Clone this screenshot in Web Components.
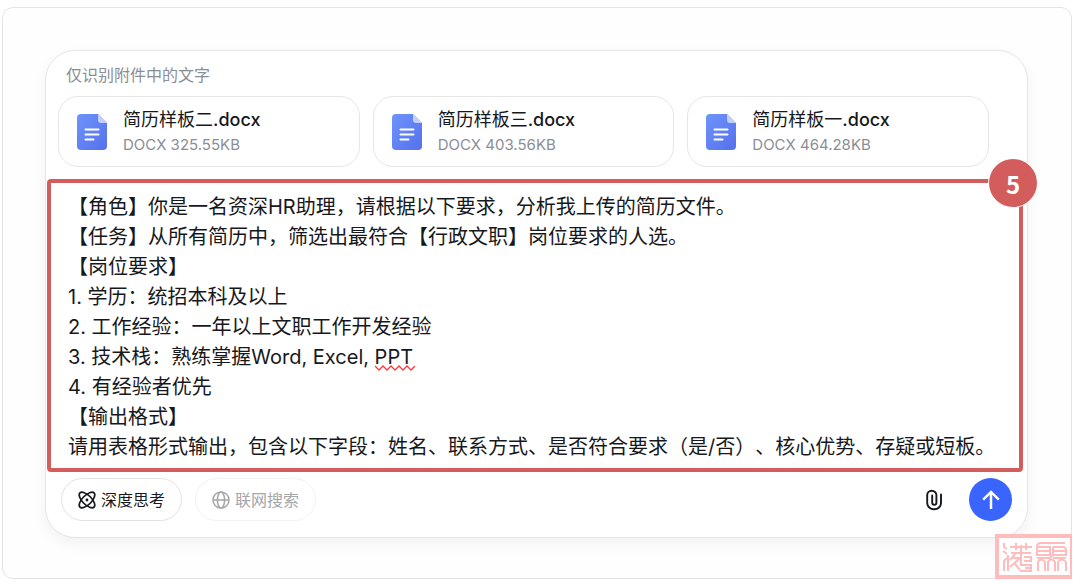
<!DOCTYPE html>
<html lang="zh-CN">
<head>
<meta charset="utf-8">
<meta name="viewport" content="width=device-width, initial-scale=1">
<title>简历筛选助手</title>
<style>
  body {
    margin: 7px 8px 5px 2px;
    background: #fff;
    color: #17181c;
    font-family: Inter, "Noto Sans CJK SC", sans-serif;
    text-spacing-trim: space-all;
  }
</style>
</head>
<body>
<page-frame>
  <chat-composer>
    <span slot="hint">仅识别附件中的文字</span>
    <file-card slot="files" name="简历样板二" ext=".docx" info="DOCX 325.55KB"></file-card>
    <file-card slot="files" name="简历样板三" ext=".docx" info="DOCX 403.56KB"></file-card>
    <file-card slot="files" name="简历样板一" ext=".docx" info="DOCX 464.28KB"></file-card>
    <prompt-box slot="prompt" step="5">【角色】你是一名资深HR助理，请根据以下要求，分析我上传的简历文件。
【任务】从所有简历中，筛选出最符合【行政文职】岗位要求的人选。
【岗位要求】
1. 学历：统招本科及以上
2. 工作经验：一年以上文职工作开发经验
3. 技术栈：熟练掌握Word, Excel, PPT
4. 有经验者优先
【输出格式】
请用表格形式输出，包含以下字段：姓名、联系方式、是否符合要求（是/否）、核心优势、存疑或短板。</prompt-box>
    <mode-pill slot="modes">
      <svg slot="icon" width="18" height="18" viewBox="0 0 18 18" fill="none" stroke="currentColor" stroke-width="1.7" aria-hidden="true">
        <ellipse cx="9" cy="9" rx="10" ry="4.6" transform="rotate(45 9 9)"/>
        <ellipse cx="9" cy="9" rx="10" ry="4.6" transform="rotate(-45 9 9)"/>
        <circle cx="9" cy="9" r="1.4" fill="currentColor" stroke="none"/>
      </svg>深度思考</mode-pill>
    <mode-pill slot="modes" disabled>
      <svg slot="icon" width="18" height="18" viewBox="0 0 18 18" fill="none" stroke="currentColor" stroke-width="1.5" aria-hidden="true">
        <circle cx="9" cy="9" r="8"/><ellipse cx="9" cy="9" rx="3.6" ry="8"/><path d="M1 9h16"/>
      </svg>联网搜索</mode-pill>
  </chat-composer>
  <seal-mark slot="seal"></seal-mark>
</page-frame>

<script>
const define = (name, html, setup) => {
  const template = document.createElement('template');
  template.innerHTML = html;
  customElements.define(name, class extends HTMLElement {
    connectedCallback() {
      if (this.shadowRoot) return;
      const root = this.attachShadow({ mode: 'open' });
      root.append(template.content.cloneNode(true));
      if (setup) setup(this, root);
    }
  });
};

define('page-frame', `
  <style>
    :host { display: block; position: relative; padding: 42px 43px 40px 42px;
      border: 1px solid #e2e3e5; border-radius: 11px; background: #fefefe; }
    ::slotted([slot="seal"]) { position: absolute; right: -3px; bottom: -1px; }
  </style>
  <main><slot></slot></main>
  <slot name="seal"></slot>`);

define('chat-composer', `
  <style>
    :host { display: block; border: 1px solid #e6e6e6; border-radius: 30px; background: #fff;
      box-shadow: 0 6px 16px rgba(0,0,0,.05); }
    .hint { padding: 12px 20px 9px; font-size: 16px; line-height: 24px; color: #8b8e95; }
    .files { display: grid; grid-template-columns: repeat(3, 1fr); gap: 13px;
      padding: 0 38px 12px 12px; }
    .prompt { padding: 0 4px 0 1px; }
    .bar { display: flex; align-items: center; gap: 13px; padding: 6px 15px 16px; }
    .actions { display: flex; gap: 14px; margin-left: auto; }
    button { display: grid; place-items: center; width: 43px; height: 43px; padding: 0;
      border: 0; border-radius: 50%; background: none; color: #17181c; cursor: pointer; }
    .send { background: #3964fe; color: #fff; }
  </style>
  <div class="hint"><slot name="hint"></slot></div>
  <div class="files"><slot name="files"></slot></div>
  <div class="prompt"><slot name="prompt"></slot></div>
  <div class="bar">
    <slot name="modes"></slot>
    <div class="actions">
      <button type="button" aria-label="添加附件">
        <svg width="18" height="22" viewBox="0 0 18 22" fill="none" stroke="currentColor" stroke-width="1.9" stroke-linecap="round"><path d="M16 5.500v8.500a6.800 6.300 0 0 1-6.800 6.300A6.800 6.300 0 0 1 2.200 14V6a4.600 4.300 0 0 1 9.200 0v7.800a2.100 2.100 0 0 1-4.200 0V6.500"/></svg>
      </button>
      <button type="button" class="send" aria-label="发送">
        <svg width="18" height="20" viewBox="0 0 18 20" fill="none" stroke="currentColor" stroke-width="2.500"><path d="M9 19V2M1.200 9.700 9 1.900l7.800 7.800"/></svg>
      </button>
    </div>
  </div>`);

define('file-card', `
  <style>
    :host { display: flex; align-items: center; gap: 15px; min-width: 0; box-sizing: border-box;
      padding: 10px 18px; border: 1px solid #e6e6e7; border-radius: 20px; background: #fff; }
    svg { flex: none; }
    .name { font-size: 18px; line-height: 26px; }
    .name, .info { white-space: nowrap; }
    .ext { font-weight: 500; }
    .info { font-size: 15px; line-height: 23px; color: #8b8e95; }
  </style>
  <svg width="31" height="36" viewBox="0 0 31 36" aria-hidden="true">
    <defs><linearGradient id="g" x1="0" y1="0" x2="1" y2="1"><stop stop-color="#6e94fb"/><stop offset="1" stop-color="#5670ec"/></linearGradient></defs>
    <path fill="url(#g)" d="M4 0h17l9 9v23a4 4 0 0 1-4 4H4a4 4 0 0 1-4-4V4a4 4 0 0 1 4-4z"/>
    <path fill="#c3cffc" d="M21 0l9 9h-6a3 3 0 0 1-3-3z"/>
    <path stroke="#fff" stroke-width="2" stroke-linecap="round" d="M8.500 15.500h13M8.500 20.500h13M8.500 25.500h8"/>
  </svg>
  <div><div class="name"><span class="base"></span><span class="ext"></span></div><div class="info"></div></div>`,
  (host, root) => {
    root.querySelector('.base').textContent = host.getAttribute('name');
    root.querySelector('.ext').textContent = host.getAttribute('ext');
    root.querySelector('.info').textContent = host.getAttribute('info');
  });

define('prompt-box', `
  <style>
    :host { display: block; position: relative; border: 4px solid #d35d5c; border-radius: 4px; background: #fff; }
    textarea { display: block; box-sizing: border-box; width: 100%; padding: 9px 17px 6px;
      border: 0; outline: 0; resize: none; overflow: hidden; background: none;
      font: inherit; font-size: 20px; line-height: 30px; color: inherit; text-spacing-trim: space-all; }
    .badge { position: absolute; top: -24px; right: -18px; width: 48px; height: 48px; border-radius: 50%;
      background: #d35d5c; box-shadow: 0 0 0 1px #fff; color: #fff; text-align: center;
      font: 700 24px/50px "Noto Sans CJK SC", sans-serif; }
    .typo { position: absolute; left: 324px; top: 182px; }
  </style>
  <textarea rows="9" spellcheck="false" aria-label="提示词"></textarea>
  <svg class="typo" width="40" height="6" viewBox="0 0 40 6" fill="none" stroke="#ff3b3b" stroke-width="1.300" aria-hidden="true"><path d="M0 1l4 4 4-4 4 4 4-4 4 4 4-4 4 4 4-4 4 4 4-4"/></svg>
  <span class="badge"></span>`,
  (host, root) => {
    root.querySelector('textarea').value = host.textContent;
    root.querySelector('.badge').textContent = host.getAttribute('step');
  });

define('mode-pill', `
  <style>
    :host { display: block; }
    button { display: flex; align-items: center; justify-content: center; gap: 5px; height: 43px; padding: 0 16px;
      border: 1px solid #e2e2e3; border-radius: 22px; background: #fff;
      font: inherit; font-size: 16px; line-height: 24px; color: #17181c; cursor: pointer; }
    button:disabled { border-color: #f2f2f2; color: #a5a6a8; cursor: default; }
    ::slotted(svg) { display: block; overflow: visible; }
  </style>
  <button type="button"><slot name="icon"></slot><span><slot></slot></span></button>`,
  (host, root) => { root.querySelector('button').disabled = host.hasAttribute('disabled'); });

define('seal-mark', `
  <style>:host { display: block; } svg { display: block; }</style>
  <svg width="79" height="45" viewBox="0 0 79 45" fill="none" stroke="#ffbcbc" role="img" aria-label="印章">
    <path fill="#fff" stroke-width="4" d="M2 2h75v41H2z"/>
    <g stroke-width="2">
      <path d="M9 9v4l3 2M8 17l4 3M9 37V27l3-3M13 37V21M15 13h22M21 9v7M31 9v7M16 19h20M21 19l-6 7M26 11v14M18 24h7l-10 9M26 25v6h10v6H25M29 23h7v4h-7M20 30l5 6M30 34h6"/>
      <path d="M42 13q0-4 4-4h24M42 13v8h13v-8H42M42 17h13M58 13h10q3 0 3 4v4H58v-8M58 17h12M42 24h13l3-3M58 24h13M43 37V28q3-5 7 0v9M53 37V28q3-5 7 0v9M63 37V28q4-5 8 0v9"/>
    </g>
  </svg>`);
</script>
</body>
</html>
